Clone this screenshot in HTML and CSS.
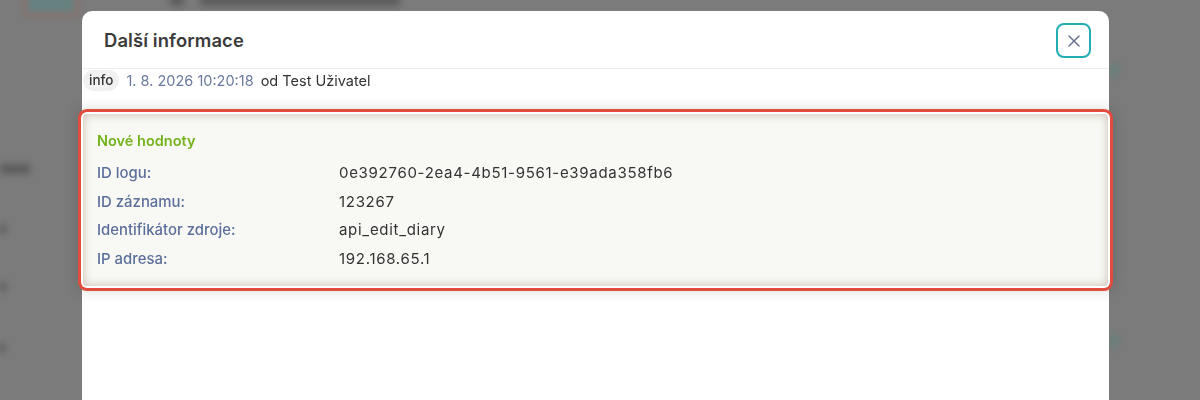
FILE: index.html
```html
<!DOCTYPE html>
<html lang="cs">
<head>
<meta charset="utf-8">
<title>Další informace</title>
<link rel="stylesheet" href="styles.css">
</head>
<body>
<div class="backdrop" aria-hidden="true">
  <div class="bg-btn"></div>
  <div class="bg-bar b-title"></div>
  <div class="bg-bar b-icon"></div>
  <div class="bg-bar s1"></div>
  <div class="bg-bar s2"></div>
  <div class="bg-bar s3"></div>
  <div class="bg-bar s4"></div>
  <div class="bg-dot d1"></div>
  <div class="bg-dot d2"></div>
</div>
<div class="modal">
  <div class="modal-header">
    <h2 class="modal-title">Další informace</h2>
    <button class="close-btn" aria-label="Zavřít">
      <svg width="14" height="14" viewBox="0 0 14 14"><path d="M2 2L12 12M12 2L2 12" stroke="#6a7090" stroke-width="1.5" stroke-linecap="round" fill="none"/></svg>
    </button>
  </div>
  <div class="meta">
    <span class="pill">info</span>
    <span class="date">1. 8. 2026 10:20:18</span>
    <span class="author">od Test Uživatel</span>
  </div>
  <div class="card">
    <div class="card-title">Nové hodnoty</div>
    <div class="rows">
      <div class="label">ID logu:</div><div class="value">0e392760-2ea4-4b51-9561-e39ada358fb6</div>
      <div class="label">ID záznamu:</div><div class="value">123267</div>
      <div class="label">Identifikátor zdroje:</div><div class="value">api_edit_diary</div>
      <div class="label">IP adresa:</div><div class="value">192.168.65.1</div>
    </div>
  </div>
</div>
</body>
</html>
```
FILE: styles.css
```css
html, body {
  margin: 0;
  padding: 0;
}
body {
  width: 1200px;
  height: 400px;
  overflow: hidden;
  background: #7b7b7b;
  font-family: Inter, "Noto Sans", "DejaVu Sans", sans-serif;
  position: relative;
}
.backdrop {
  position: absolute;
  inset: 0;
  filter: blur(3px);
  opacity: 0.45;
}
.bg-btn {
  position: absolute;
  left: 24px;
  top: -14px;
  width: 48px;
  height: 24px;
  border: 3px solid #b85a50;
  border-radius: 6px;
  background: #4e8a8a;
}
.bg-bar {
  position: absolute;
  background: #3a3a3a;
  border-radius: 3px;
}
.b-icon { left: 170px; top: -6px; width: 14px; height: 12px; }
.b-title { left: 200px; top: -10px; width: 200px; height: 16px; }
.s1 { left: 0; top: 164px; width: 30px; height: 10px; }
.s2 { left: 0; top: 224px; width: 6px; height: 10px; }
.s3 { left: 0; top: 282px; width: 6px; height: 10px; }
.s4 { left: 0; top: 343px; width: 5px; height: 10px; }
.bg-dot {
  position: absolute;
  left: 1110px;
  width: 8px;
  height: 14px;
  background: #4f8a80;
  border-radius: 4px;
}
.d1 { top: 64px; }
.d2 { top: 334px; }

.modal {
  position: relative;
  margin: 11px 0 0 82px;
  width: 1027px;
  height: 389px;
  background: #fff;
  border-radius: 10px 10px 0 0;
}
.modal-header {
  height: 57px;
  border-bottom: 1px solid #ededed;
  display: flex;
  align-items: center;
  justify-content: space-between;
  padding: 0 18px 0 22px;
}
.modal-title {
  margin: 0;
  font-size: 18.4px;
  font-weight: 600;
  color: #3b3b3b;
  letter-spacing: 0.1px;
}
.close-btn {
  width: 35px;
  height: 35px;
  border: 2px solid #23adb3;
  border-radius: 8px;
  background: #fff;
  display: flex;
  align-items: center;
  justify-content: center;
  padding: 0;
  margin-top: 2px;
}
.meta {
  display: flex;
  align-items: center;
  height: 22px;
  padding-left: 1px;
  font-size: 14px;
}
.pill {
  background: #f1f1f1;
  border-radius: 11px;
  padding: 0 6px;
  height: 21px;
  line-height: 21px;
  font-weight: 500;
  color: #333;
  font-size: 13.5px;
}
.date {
  margin-left: 7px;
  color: #6a7a9e;
  font-size: 14.5px;
}
.author {
  margin-left: 7px;
  color: #333;
  font-size: 14.5px;
}
.card {
  margin: 23px 1px 0 1px;
  padding: 17px 14px 17px;
  background: #f8f9f4;
  border-radius: 4px;
  box-shadow:
    inset 0 0 10px rgba(140, 110, 90, 0.45),
    0 0 0 2px #ffffff,
    0 0 0 5px #e14c3f,
    0 0 14px 5px rgba(0, 0, 0, 0.16);
}
.card-title {
  color: #74b31b;
  font-size: 14.5px;
  font-weight: 600;
  line-height: 20px;
  margin-bottom: 12px;
}
.rows {
  display: grid;
  grid-template-columns: 242px 1fr;
  row-gap: 8.6px;
  line-height: 20px;
}
.label {
  color: #5c6f9c;
  font-size: 14.9px;
  font-weight: 500;
}
.value {
  color: #333;
  font-size: 15px;
  letter-spacing: 0.7px;
}
```
